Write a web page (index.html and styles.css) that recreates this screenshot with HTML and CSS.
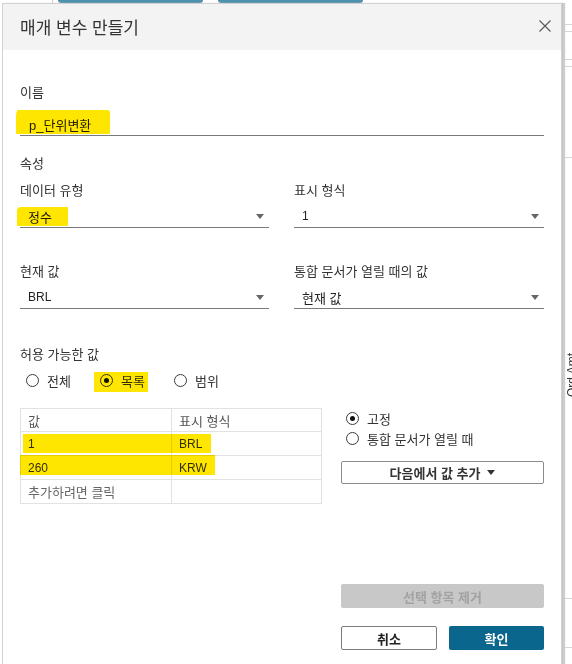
FILE: index.html
```html
<!DOCTYPE html>
<html lang="ko">
<head>
<meta charset="utf-8">
<title>매개 변수 만들기</title>
<link rel="stylesheet" href="styles.css">
</head>
<body>
<div class="backdrop">
  <div class="tab tab-a"></div>
  <div class="tab tab-b"></div>
  <div class="bg-vline"></div>
  <div class="bg-hline l1"></div>
  <div class="bg-hline l2"></div>
  <div class="bg-hline l3"></div>
  <div class="bg-hline l4"></div>
  <div class="bg-hline l5"></div>
  <div class="bg-hline l6"></div>
  <div class="bg-hline l7"></div>
  <div class="axis-label">Ord Amt</div>
</div>

<div class="dialog">
  <header class="dlg-head">
    <h1 class="dlg-title">매개 변수 만들기</h1>
    <button class="close" type="button" aria-label="닫기">
      <svg width="12" height="12" viewBox="0 0 12 12"><path d="M0.5 0.5L11.5 11.5M11.5 0.5L0.5 11.5" stroke="#5a5a5a" stroke-width="1.2" fill="none"/></svg>
    </button>
  </header>

  <div class="dlg-body">
    <div class="label name-label">이름</div>
    <div class="field name-field"><span class="hl hl-name"></span>p_단위변환</div>

    <div class="label section-title">속성</div>

    <div class="prop-grid">
      <div class="prop">
        <div class="label">데이터 유형</div>
        <div class="field select"><span class="hl hl-type"></span><span>정수</span><span class="caret"></span></div>
      </div>
      <div class="prop">
        <div class="label">표시 형식</div>
        <div class="field select"><span class="latin">1</span><span class="caret"></span></div>
      </div>
      <div class="prop">
        <div class="label">현재 값</div>
        <div class="field select"><span class="latin">BRL</span><span class="caret"></span></div>
      </div>
      <div class="prop">
        <div class="label">통합 문서가 열릴 때의 값</div>
        <div class="field select"><span>현재 값</span><span class="caret"></span></div>
      </div>
    </div>

    <div class="label allowed-label">허용 가능한 값</div>
    <div class="radio-row">
      <label class="radio"><span class="dot"></span>전체</label>
      <label class="radio"><span class="hl hl-list"></span><span class="dot on"></span>목록</label>
      <label class="radio"><span class="dot"></span>범위</label>
    </div>

    <div class="list-area">
      <div class="values">
        <span class="hl hl-row1"></span>
        <span class="hl hl-row2"></span>
        <div class="cell head">값</div>
        <div class="cell head">표시 형식</div>
        <div class="cell latin">1</div>
        <div class="cell latin">BRL</div>
        <div class="cell latin">260</div>
        <div class="cell latin">KRW</div>
        <div class="cell hint last">추가하려면 클릭</div>
        <div class="cell last"></div>
      </div>

      <div class="side">
        <label class="radio side-radio"><span class="dot on"></span>고정</label>
        <label class="radio side-radio"><span class="dot"></span>통합 문서가 열릴 때</label>
        <button class="btn add" type="button">다음에서 값 추가<span class="caret small"></span></button>
        <button class="btn remove" type="button">선택 항목 제거</button>
        <div class="actions">
          <button class="btn cancel" type="button">취소</button>
          <button class="btn ok" type="button">확인</button>
        </div>
      </div>
    </div>
  </div>
</div>
</body>
</html>
```

FILE: styles.css
```css
* { box-sizing: border-box; }

html, body { margin: 0; padding: 0; }

body {
  width: 572px;
  height: 664px;
  overflow: hidden;
  position: relative;
  background: #ffffff;
  font-family: "Liberation Sans", "Noto Sans CJK KR", sans-serif;
  font-size: 13px;
  color: #333333;
}

.latin { font-size: 12px; }

/* ---------- background application (behind the dialog) ---------- */
.backdrop { position: absolute; inset: 0; }

.tab {
  position: absolute;
  top: 0;
  height: 3px;
  background: #4e91ab;
  border-radius: 0 0 3px 3px;
}
.tab-a { left: 58px; width: 145px; }
.tab-b { left: 218px; width: 145px; }

.bg-vline {
  position: absolute;
  left: 52px;
  top: 0;
  width: 1px;
  height: 3px;
  background: #cfcfcf;
}

.bg-hline {
  position: absolute;
  left: 563px;
  width: 9px;
  height: 1px;
  background: #d6d6d6;
}
.l1 { top: 24px; }
.l2 { top: 31px; }
.l3 { top: 59px; }
.l4 { top: 66px; }
.l5 { top: 157px; }
.l6 { top: 598px; }
.l7 { top: 647px; }

.axis-label {
  position: absolute;
  left: 565px;
  top: 353px;
  writing-mode: vertical-rl;
  transform: rotate(180deg);
  font-size: 12px;
  line-height: 14px;
  color: #333;
}

/* ---------- dialog ---------- */
.dialog {
  position: absolute;
  left: 2px;
  top: 3px;
  width: 560px;
  height: 661px;
  background: #ffffff;
  border: 1px solid #d2d2d2;
  border-bottom: 0;
  box-shadow: 1px 0 0 #c4c4c4, 3px 0 1px #cdcdcd;
}

.dlg-head {
  height: 46px;
  background: #f3f3f3;
  display: flex;
  align-items: center;
  justify-content: space-between;
  padding: 0 10px 0 17px;
}

.dlg-title {
  margin: 0;
  font-size: 17px;
  font-weight: normal;
  line-height: 20px;
  color: #333333;
  font-family: "Noto Sans CJK KR", sans-serif;
}

.close {
  border: 0;
  background: transparent;
  padding: 0;
  width: 12px;
  height: 12px;
  margin-top: -2px;
  display: flex;
}

.dlg-body {
  padding: 0 17px;
}

.label {
  line-height: 16px;
  color: #333333;
}

.name-label { margin-top: 35px; }

.field {
  position: relative;
  height: 23px;
  border-bottom: 1px solid #7a7a7a;
  display: flex;
  align-items: center;
  padding: 0 5px 0 8px;
  color: #222222;
}

.name-field { margin-top: 12px; padding-left: 9px; }

.section-title { margin-top: 20px; }

.prop-grid {
  margin-top: 11px;
  display: grid;
  grid-template-columns: 249px 250px;
  column-gap: 25px;
  row-gap: 36px;
}

.prop .field { margin-top: 6px; }

.select { justify-content: space-between; }

.caret {
  width: 0;
  height: 0;
  border-left: 4px solid transparent;
  border-right: 4px solid transparent;
  border-top: 5px solid #666666;
}

.caret.small {
  border-top: 5px solid #333333;
  margin-left: 7px;
}

.allowed-label { margin-top: 38px; }

.radio-row {
  margin-top: 7px;
  height: 20px;
  display: flex;
  padding-left: 6px;
}

.radio {
  position: relative;
  display: flex;
  align-items: center;
  gap: 8px;
  height: 20px;
  color: #333333;
}

.radio-row .radio { width: 74px; }

.dot {
  width: 13px;
  height: 13px;
  border: 1px solid #3a3a3a;
  border-radius: 50%;
  background: #ffffff;
  display: flex;
  align-items: center;
  justify-content: center;
  flex: none;
}

.dot.on::after {
  content: "";
  width: 5px;
  height: 5px;
  border-radius: 50%;
  background: #111111;
}

/* ---------- list + side ---------- */
.list-area {
  margin-top: 18px;
  display: flex;
  gap: 18px;
  align-items: flex-start;
}

.values {
  position: relative;
  width: 302px;
  flex: none;
  display: grid;
  grid-template-columns: 151px 149px;
  border: 1px solid #e2e2e2;
}

.cell {
  height: 24px;
  border-bottom: 1px solid #e2e2e2;
  padding-left: 7px;
  display: flex;
  align-items: center;
  color: #333333;
}

.cell:nth-child(odd) { border-right: 1px solid #e2e2e2; }
.cell.head { height: 23px; color: #555555; }
.cell.last { border-bottom: 0; height: 23px; }
.cell.hint { color: #666666; }

.side {
  width: 204px;
  flex: none;
  display: flex;
  flex-direction: column;
  margin-left: 1px;
}

.side-radio { padding-left: 5px; }

.btn {
  font-family: "Liberation Sans", "Noto Sans CJK KR", sans-serif;
  font-size: 13px;
  font-weight: bold;
  border-radius: 2px;
  display: flex;
  align-items: center;
  justify-content: center;
  padding: 0;
}

.add {
  margin-top: 13px;
  height: 23px;
  width: 203px;
  background: #ffffff;
  border: 1px solid #8c8c8c;
  color: #333333;
}

.remove {
  margin-top: 100px;
  height: 24px;
  width: 203px;
  background: #c8c8c8;
  border: 0;
  color: #a2a2a2;
}

.actions {
  margin-top: 18px;
  display: flex;
  gap: 12px;
}

.cancel {
  width: 96px;
  height: 24px;
  background: #ffffff;
  border: 1px solid #7c7c7c;
  color: #222222;
}

.ok {
  width: 95px;
  height: 24px;
  background: #0a668c;
  border: 0;
  color: #ffffff;
}

/* ---------- marker highlights (annotation overlay) ---------- */
.hl {
  position: absolute;
  background: #ffe600;
  mix-blend-mode: multiply;
  pointer-events: none;
}

.hl-name {
  left: -4px;
  top: -3px;
  width: 94px;
  height: 24px;
  border-radius: 2px 3px 1px 1px / 7px 2px 1px 1px;
}

.hl-type {
  left: -3px;
  top: 2px;
  width: 51px;
  height: 19px;
  border-radius: 4px 1px 1px 1px;
}

.hl-list {
  left: -6px;
  top: 2px;
  width: 54px;
  height: 20px;
}

.hl-row1 {
  left: 2px;
  top: 25px;
  width: 188px;
  height: 19px;
}

.hl-row2 {
  left: -1px;
  top: 46px;
  width: 195px;
  height: 20px;
}
```
